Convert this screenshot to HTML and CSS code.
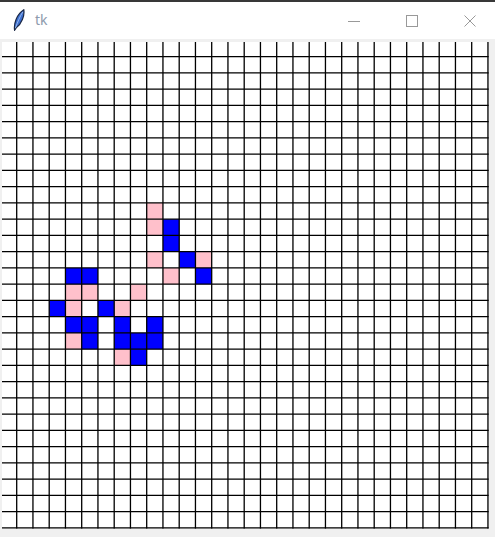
FILE: index.html
```html
<!DOCTYPE html>
<html lang="en">
<head>
    <meta charset="UTF-8">
    <meta name="viewport" content="width=device-width, initial-scale=1.0">
    <title>tk</title>
    <link rel="stylesheet" href="styles.css">
</head>
<body>
    <div class="window">
        <div class="titlebar">
            <svg class="feather" width="12" height="22" viewBox="0 0 12 22">
                <path d="M1.6 21.2 C0.6 15 3.4 5.5 10.8 0.8 C11.8 6.5 8.6 14.8 3.2 18.8 Z" fill="#3d6fcf" stroke="#1a2745" stroke-width="1.2"/>
                <path d="M2.4 19.2 C4.6 13 7 7.2 9.8 3" fill="none" stroke="#a8c6f4" stroke-width="0.8"/>
            </svg>
            <span class="title">tk</span>
            <div class="controls">
                <div class="ctrl">
                    <svg width="12" height="12" viewBox="0 0 12 12"><path d="M0 6.5H12" stroke="#999" stroke-width="1"/></svg>
                </div>
                <div class="ctrl">
                    <svg width="12" height="12" viewBox="0 0 12 12"><rect x="0.5" y="0.5" width="11" height="11" fill="none" stroke="#999" stroke-width="1"/></svg>
                </div>
                <div class="ctrl">
                    <svg width="12" height="12" viewBox="0 0 12 12"><path d="M0.5 0.5L11.5 11.5M11.5 0.5L0.5 11.5" stroke="#999" stroke-width="1"/></svg>
                </div>
            </div>
        </div>

        <div class="client">
            <svg class="board" width="487" height="487" viewBox="0 0 487 487">
                <rect x="0" y="0" width="486" height="486" fill="#fff"/>
                <g fill="#ffc0cb">
                    <rect x="144.7" y="160.95" width="16.25" height="16.25"/>
                    <rect x="144.7" y="177.2" width="16.25" height="16.25"/>
                    <rect x="144.7" y="209.7" width="16.25" height="16.25"/>
                    <rect x="193.45" y="209.7" width="16.25" height="16.25"/>
                    <rect x="160.95" y="225.95" width="16.25" height="16.25"/>
                    <rect x="63.45" y="242.2" width="16.25" height="16.25"/>
                    <rect x="79.7" y="242.2" width="16.25" height="16.25"/>
                    <rect x="128.45" y="242.2" width="16.25" height="16.25"/>
                    <rect x="63.45" y="258.45" width="16.25" height="16.25"/>
                    <rect x="112.2" y="258.45" width="16.25" height="16.25"/>
                    <rect x="63.45" y="290.95" width="16.25" height="16.25"/>
                    <rect x="112.2" y="307.2" width="16.25" height="16.25"/>
                </g>
                <g fill="#0000ff">
                    <rect x="160.95" y="177.2" width="16.25" height="16.25"/>
                    <rect x="160.95" y="193.45" width="16.25" height="16.25"/>
                    <rect x="177.2" y="209.7" width="16.25" height="16.25"/>
                    <rect x="63.45" y="225.95" width="16.25" height="16.25"/>
                    <rect x="79.7" y="225.95" width="16.25" height="16.25"/>
                    <rect x="193.45" y="225.95" width="16.25" height="16.25"/>
                    <rect x="47.2" y="258.45" width="16.25" height="16.25"/>
                    <rect x="95.95" y="258.45" width="16.25" height="16.25"/>
                    <rect x="63.45" y="274.7" width="16.25" height="16.25"/>
                    <rect x="79.7" y="274.7" width="16.25" height="16.25"/>
                    <rect x="112.2" y="274.7" width="16.25" height="16.25"/>
                    <rect x="144.7" y="274.7" width="16.25" height="16.25"/>
                    <rect x="79.7" y="290.95" width="16.25" height="16.25"/>
                    <rect x="112.2" y="290.95" width="16.25" height="16.25"/>
                    <rect x="128.45" y="290.95" width="16.25" height="16.25"/>
                    <rect x="144.7" y="290.95" width="16.25" height="16.25"/>
                    <rect x="128.45" y="307.2" width="16.25" height="16.25"/>
                </g>
                <!-- grid lines, 16.25px apart -->
                <path class="lines" d="M14.7 0V486.6 M30.95 0V486.6 M47.2 0V486.6 M63.45 0V486.6 M79.7 0V486.6 M95.95 0V486.6 M112.2 0V486.6 M128.45 0V486.6 M144.7 0V486.6 M160.95 0V486.6 M177.2 0V486.6 M193.45 0V486.6 M209.7 0V486.6 M225.95 0V486.6 M242.2 0V486.6 M258.45 0V486.6 M274.7 0V486.6 M290.95 0V486.6 M307.2 0V486.6 M323.45 0V486.6 M339.7 0V486.6 M355.95 0V486.6 M372.2 0V486.6 M388.45 0V486.6 M404.7 0V486.6 M420.95 0V486.6 M437.2 0V486.6 M453.45 0V486.6 M469.7 0V486.6 M485.95 0V486.6"/>
                <path class="lines" d="M0 14.7H486.6 M0 30.95H486.6 M0 47.2H486.6 M0 63.45H486.6 M0 79.7H486.6 M0 95.95H486.6 M0 112.2H486.6 M0 128.45H486.6 M0 144.7H486.6 M0 160.95H486.6 M0 177.2H486.6 M0 193.45H486.6 M0 209.7H486.6 M0 225.95H486.6 M0 242.2H486.6 M0 258.45H486.6 M0 274.7H486.6 M0 290.95H486.6 M0 307.2H486.6 M0 323.45H486.6 M0 339.7H486.6 M0 355.95H486.6 M0 372.2H486.6 M0 388.45H486.6 M0 404.7H486.6 M0 420.95H486.6 M0 437.2H486.6 M0 453.45H486.6 M0 469.7H486.6 M0 485.95H486.6"/>
            </svg>
        </div>
    </div>
</body>
</html>
```

FILE: styles.css
```css
html, body {
    margin: 0;
    padding: 0;
}
body {
    width: 495px;
    height: 537px;
    overflow: hidden;
    background-color: #f0f0f0;
    font-family: "Noto Sans", "Open Sans", Arial, sans-serif;
}
.window {
    display: flex;
    flex-direction: column;
    height: 100%;
}
.titlebar {
    display: flex;
    align-items: center;
    height: 37px;
    border-top: 2px solid #383838;
    background-color: #fff;
    padding-left: 13px;
}
.feather {
    display: block;
    margin-top: -1px;
}
.title {
    margin-left: 10px;
    font-size: 14px;
    color: #8e9aac;
    line-height: 1;
    margin-top: -1px;
}
.controls {
    display: flex;
    margin-left: auto;
    margin-right: -4px;
    height: 100%;
}
.ctrl {
    width: 58px;
    display: flex;
    align-items: center;
    justify-content: center;
}
.ctrl svg {
    display: block;
}
.client {
    padding: 3px 0 0 2px;
}
.board {
    display: block;
}
.lines {
    fill: none;
    stroke: #000;
    stroke-width: 1.3;
}
```
